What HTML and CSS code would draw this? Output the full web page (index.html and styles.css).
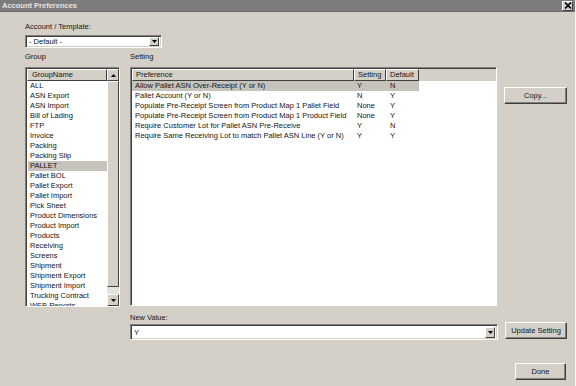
FILE: index.html
```html
<!DOCTYPE html>
<html>
<head>
<meta charset="utf-8">
<link rel="stylesheet" href="styles.css">
</head>
<body>
<div class="window">
  <div class="titlebar">
    <span class="title">Account Preferences</span>
    <span class="close"><svg width="8" height="7" viewBox="0 0 8 7"><path d="M1 0.5 L7 6.5 M7 0.5 L1 6.5" stroke="#000" stroke-width="1.6"/></svg></span>
  </div>
  <div class="body">
    <div class="label acct">Account / Template:</div>
    <div class="combo combo-small">
      <span class="combo-val">- Default -</span>
      <span class="arrowbtn"><svg width="5" height="3" viewBox="0 0 5 3"><path d="M0 0 H5 L2.5 3 Z" fill="#000"/></svg></span>
    </div>
    <div class="main">
      <div class="label lbl-group">Group</div>
      <div class="label lbl-setting">Setting</div>
      <div class="listbox">
        <div class="list-inner">
          <div class="hdr"><div class="hcell hcell-full">GroupName</div></div>
          <div class="rows">
            <div class="row">ALL</div>
            <div class="row">ASN Export</div>
            <div class="row">ASN Import</div>
            <div class="row">Bill of Lading</div>
            <div class="row">FTP</div>
            <div class="row">Invoice</div>
            <div class="row">Packing</div>
            <div class="row">Packing Slip</div>
            <div class="row sel">PALLET</div>
            <div class="row">Pallet BOL</div>
            <div class="row">Pallet Export</div>
            <div class="row">Pallet Import</div>
            <div class="row">Pick Sheet</div>
            <div class="row">Product Dimensions</div>
            <div class="row">Product Import</div>
            <div class="row">Products</div>
            <div class="row">Receiving</div>
            <div class="row">Screens</div>
            <div class="row">Shipment</div>
            <div class="row">Shipment Export</div>
            <div class="row">Shipment Import</div>
            <div class="row">Trucking Contract</div>
            <div class="row">WEB Reports</div>
          </div>
        </div>
        <div class="scrollbar">
          <div class="sbtn"><svg width="5" height="3" viewBox="0 0 5 3"><path d="M0 3 H5 L2.5 0 Z" fill="#000"/></svg></div>
          <div class="track"><div class="thumb"></div></div>
          <div class="sbtn"><svg width="5" height="3" viewBox="0 0 5 3"><path d="M0 0 H5 L2.5 3 Z" fill="#000"/></svg></div>
        </div>
      </div>
      <div class="table">
        <div class="hdr">
          <div class="hcell c-pref">Preference</div>
          <div class="hcell c-set">Setting</div>
          <div class="hcell c-def">Default</div>
        </div>
        <div class="trow sel"><div class="cell c-pref">Allow Pallet ASN Over-Receipt (Y or N)</div><div class="cell c-set">Y</div><div class="cell c-def">N</div></div>
        <div class="trow"><div class="cell c-pref">Pallet Account (Y or N)</div><div class="cell c-set">N</div><div class="cell c-def">Y</div></div>
        <div class="trow"><div class="cell c-pref">Populate Pre-Receipt Screen from Product Map 1 Pallet Field</div><div class="cell c-set">None</div><div class="cell c-def">Y</div></div>
        <div class="trow"><div class="cell c-pref">Populate Pre-Receipt Screen from Product Map 1 Product Field</div><div class="cell c-set">None</div><div class="cell c-def">Y</div></div>
        <div class="trow"><div class="cell c-pref">Require Customer Lot for Pallet ASN Pre-Receive</div><div class="cell c-set">Y</div><div class="cell c-def">N</div></div>
        <div class="trow"><div class="cell c-pref">Require Same Receiving Lot to match Pallet ASN Line (Y or N)</div><div class="cell c-set">Y</div><div class="cell c-def">Y</div></div>
      </div>
      <div class="btn btn-copy">Copy...</div>
      <div class="newval">
        <div class="label lbl-new">New Value:</div>
        <div class="combo combo-wide">
          <span class="combo-val">Y</span>
          <span class="arrowbtn"><svg width="5" height="3" viewBox="0 0 5 3"><path d="M0 0 H5 L2.5 3 Z" fill="#000"/></svg></span>
        </div>
      </div>
      <div class="btn btn-update">Update Setting</div>
    </div>
    <div class="footer">
      <div class="btn btn-done">Done</div>
    </div>
  </div>
</div>
</body>
</html>
```
FILE: styles.css
```css
html, body {
  margin: 0;
  padding: 0;
}
body {
  width: 576px;
  height: 386px;
  overflow: hidden;
  background: #d4d0c8;
  font-family: "Liberation Sans", Arial, sans-serif;
  font-size: 7.5px;
  color: #151515;
}
.window {
  width: 576px;
  height: 386px;
  display: flex;
  flex-direction: column;
  box-sizing: border-box;
  border-right: 1px solid #f4f4f4;
}
.titlebar {
  height: 11px;
  background: #7c7c7c;
  border-bottom: 1px solid #6a6a6a;
  display: flex;
  align-items: center;
  justify-content: space-between;
  padding: 0 2px 0 2px;
}
.title {
  color: #e4e4e4;
  font-weight: bold;
  font-size: 7.5px;
}
.close {
  background: #d4d0c8;
  border-top: 1px solid #fff;
  border-left: 1px solid #fff;
  border-right: 1px solid #404040;
  border-bottom: 1px solid #404040;
  display: flex;
  align-items: center;
  justify-content: center;
  box-sizing: border-box;
  width: 11px;
  height: 10px;
}
.body {
  padding: 0 9px 0 25px;
  display: flex;
  flex-direction: column;
}
.label {
  line-height: 10px;
  height: 10px;
}
.acct {
  margin-top: 10px;
}
.combo {
  background: #fff;
  border-top: 1px solid #808080;
  border-left: 1px solid #808080;
  border-right: 1px solid #fff;
  border-bottom: 1px solid #fff;
  box-shadow: inset 1px 1px 0 #404040, inset -1px -1px 0 #d4d0c8;
  display: flex;
  align-items: center;
  justify-content: space-between;
  box-sizing: border-box;
  padding: 0 2px 0 3px;
}
.combo-small {
  margin-top: 3px;
  width: 137px;
  height: 13px;
}
.combo-wide {
  width: 368px;
  height: 16px;
  margin-top: 1px;
}
.arrowbtn {
  width: 10px;
  height: 9px;
  background: #d4d0c8;
  border-top: 1px solid #fff;
  border-left: 1px solid #fff;
  border-right: 1px solid #404040;
  border-bottom: 1px solid #404040;
  box-sizing: border-box;
  display: flex;
  align-items: center;
  justify-content: center;
}
.combo-wide .arrowbtn {
  height: 11px;
}
.main {
  display: grid;
  grid-template-columns: 95px 377px 70px;
  grid-template-rows: 15px 240px auto;
  margin-top: 4px;
}
.lbl-group {
  grid-column: 1;
  grid-row: 1;
}
.lbl-setting {
  grid-column: 2;
  grid-row: 1;
  margin-left: 10px;
}
.listbox {
  grid-column: 1;
  grid-row: 2;
  background: #fff;
  border-top: 1px solid #808080;
  border-left: 1px solid #808080;
  border-right: 1px solid #fff;
  border-bottom: 1px solid #fff;
  box-shadow: inset 1px 1px 0 #404040;
  padding: 1px 0 0 1px;
  box-sizing: border-box;
  display: flex;
  overflow: hidden;
}
.list-inner {
  flex: 1;
  overflow: hidden;
}
.hdr {
  display: flex;
  height: 12px;
  background: #d4d0c8;
}
.hcell {
  box-sizing: border-box;
  height: 12px;
  line-height: 10px;
  padding-left: 4px;
  border-top: 1px solid #fff;
  border-left: 1px solid #fff;
  border-right: 1px solid #404040;
  border-bottom: 1px solid #404040;
  white-space: nowrap;
}
.hcell-full {
  width: 100%;
}
.rows {
  padding-left: 1px;
}
.row {
  height: 10px;
  line-height: 10px;
  padding-left: 2px;
  white-space: nowrap;
}
.sel {
  background: #c6c3bc;
}
.scrollbar {
  width: 12px;
  display: flex;
  flex-direction: column;
  background: #e6e3de;
}
.sbtn {
  height: 12px;
  box-sizing: border-box;
  background: #d4d0c8;
  border-top: 1px solid #fff;
  border-left: 1px solid #fff;
  border-right: 1px solid #404040;
  border-bottom: 1px solid #404040;
  display: flex;
  align-items: center;
  justify-content: center;
}
.track {
  flex: 1;
  display: flex;
  flex-direction: column;
}
.thumb {
  height: 206px;
  box-sizing: border-box;
  background: #d4d0c8;
  border-top: 1px solid #fff;
  border-left: 1px solid #fff;
  border-right: 1px solid #404040;
  border-bottom: 1px solid #404040;
}
.table {
  grid-column: 2;
  grid-row: 2;
  margin-left: 10px;
  height: 239px;
  background: #fff;
  border-top: 1px solid #808080;
  border-left: 1px solid #808080;
  border-right: 1px solid #fff;
  border-bottom: 1px solid #fff;
  box-shadow: inset 1px 1px 0 #404040;
  padding: 1px 0 0 1px;
  box-sizing: border-box;
  overflow: hidden;
}
.table .hdr {
  width: 100%;
}
.table .hcell {
  padding-left: 3px;
}
.c-pref {
  width: 222px;
}
.c-set {
  width: 32px;
}
.c-def {
  width: 33px;
}
.trow {
  display: flex;
  width: 287px;
  height: 10px;
  line-height: 10px;
}
.cell {
  box-sizing: border-box;
  padding-left: 3px;
  white-space: nowrap;
  overflow: hidden;
}
.cell.c-def {
  padding-left: 4px;
}
.btn {
  background: #d4d0c8;
  border-top: 1px solid #fff;
  border-left: 1px solid #fff;
  border-right: 1px solid #404040;
  border-bottom: 1px solid #404040;
  box-shadow: inset -1px -1px 0 #808080;
  box-sizing: border-box;
  display: flex;
  align-items: center;
  justify-content: center;
  height: 17px;
  line-height: 10px;
}
.btn-copy {
  grid-column: 3;
  grid-row: 2;
  margin-left: 7px;
  margin-top: 20px;
  width: 63px;
  align-self: start;
}
.newval {
  grid-column: 2;
  grid-row: 3;
  margin-left: 10px;
  padding-top: 6px;
}
.btn-update {
  grid-column: 3;
  grid-row: 3;
  margin-left: 8px;
  width: 62px;
  align-self: end;
  margin-bottom: 1px;
}
.footer {
  display: flex;
  justify-content: flex-end;
  margin-top: 23px;
}
.btn-done {
  width: 51px;
}
```
